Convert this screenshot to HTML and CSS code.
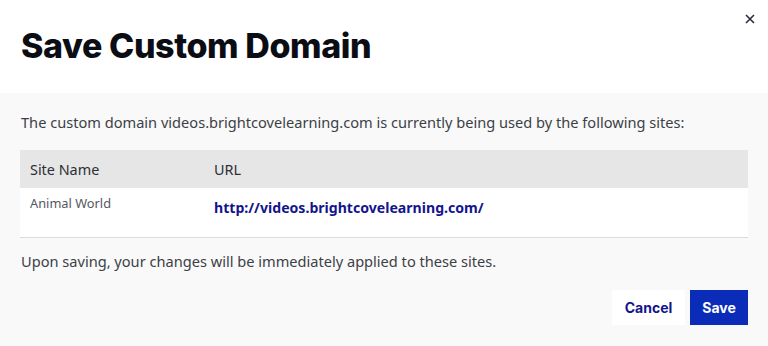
FILE: index.html
```html
<!DOCTYPE html>
<html lang="en">
<head>
    <meta charset="UTF-8">
    <meta name="viewport" content="width=device-width, initial-scale=1">
    <title>Save Custom Domain</title>
    <link rel="stylesheet" href="styles.css">
</head>
<body>
    <div class="modal">
        <div class="modal-header">
            <h1>Save Custom Domain</h1>
            <button class="close" type="button" aria-label="Close">
                <svg width="10" height="10" viewBox="0 0 10 10">
                    <path d="M1 1 L9 9 M9 1 L1 9" stroke="#2a2d36" stroke-width="1.6" fill="none"/>
                </svg>
            </button>
        </div>

        <div class="modal-body">
            <p>The custom domain videos.brightcovelearning.com is currently being used by the following sites:</p>

            <table class="sites">
                <thead>
                    <tr>
                        <th class="col-name">Site Name</th>
                        <th>URL</th>
                    </tr>
                </thead>
                <tbody>
                    <tr>
                        <td class="site-name">Animal World</td>
                        <td><a href="#">http://videos.brightcovelearning.com/</a></td>
                    </tr>
                </tbody>
            </table>

            <p>Upon saving, your changes will be immediately applied to these sites.</p>

            <div class="actions">
                <button type="button" class="btn btn-cancel">Cancel</button>
                <button type="button" class="btn btn-save">Save</button>
            </div>
        </div>
    </div>
</body>
</html>
```

FILE: styles.css
```css
:root {
    --text-color: #3c3f46;
    --title-color: #0b0d14;
    --link-color: #14158c;
    --primary-color: #0a2cb9;
    --body-bg: #f9f9f9;
    --head-bg: #e5e6e5;
}

* {
    margin: 0;
    padding: 0;
    box-sizing: border-box;
}

body {
    font-family: "Noto Sans", "Open Sans", sans-serif;
    background: var(--body-bg);
    color: var(--text-color);
}

.modal {
    width: 768px;
    height: 346px;
    background: var(--body-bg);
}

.modal-header {
    position: relative;
    height: 93px;
    background: white;
    padding: 26px 21px 0;
}

.modal-header h1 {
    font-family: Inter, sans-serif;
    font-size: 34px;
    font-weight: 800;
    letter-spacing: -0.4px;
    color: var(--title-color);
    line-height: 40px;
}

.close {
    position: absolute;
    top: 13px;
    right: 12px;
    width: 12px;
    height: 12px;
    border: none;
    background: none;
    display: flex;
    align-items: center;
    justify-content: center;
    cursor: pointer;
}

.modal-body {
    padding: 18px 20px 0 21px;
}

.modal-body p {
    font-size: 14.6px;
    line-height: 22px;
}

.sites {
    width: 728px;
    margin: 17px 0 12px -1px;
    border-collapse: collapse;
    background: white;
    border-bottom: 1px solid #dcdcdc;
}

.sites th {
    background: var(--head-bg);
    font-weight: normal;
    font-size: 14.4px;
    text-align: left;
    height: 38px;
    padding: 0 10px;
    color: #2c2f36;
}

.sites th.col-name {
    width: 184px;
}

.sites td {
    height: 49px;
    padding: 8px 10px 0;
    vertical-align: top;
}

.sites td.site-name {
    font-size: 12.8px;
    color: #555860;
    padding-top: 6px;
}

.sites a {
    font-size: 14.1px;
    font-weight: 700;
    color: var(--link-color);
    text-decoration: none;
}

.actions {
    display: flex;
    justify-content: flex-end;
    gap: 5px;
    margin-top: 18px;
}

.btn {
    height: 35px;
    border: none;
    font-family: Inter, sans-serif;
    font-size: 14px;
    font-weight: 700;
    cursor: pointer;
}

.btn-cancel {
    width: 73px;
    background: white;
    color: var(--link-color);
}

.btn-save {
    width: 58px;
    background: var(--primary-color);
    color: white;
}
```
